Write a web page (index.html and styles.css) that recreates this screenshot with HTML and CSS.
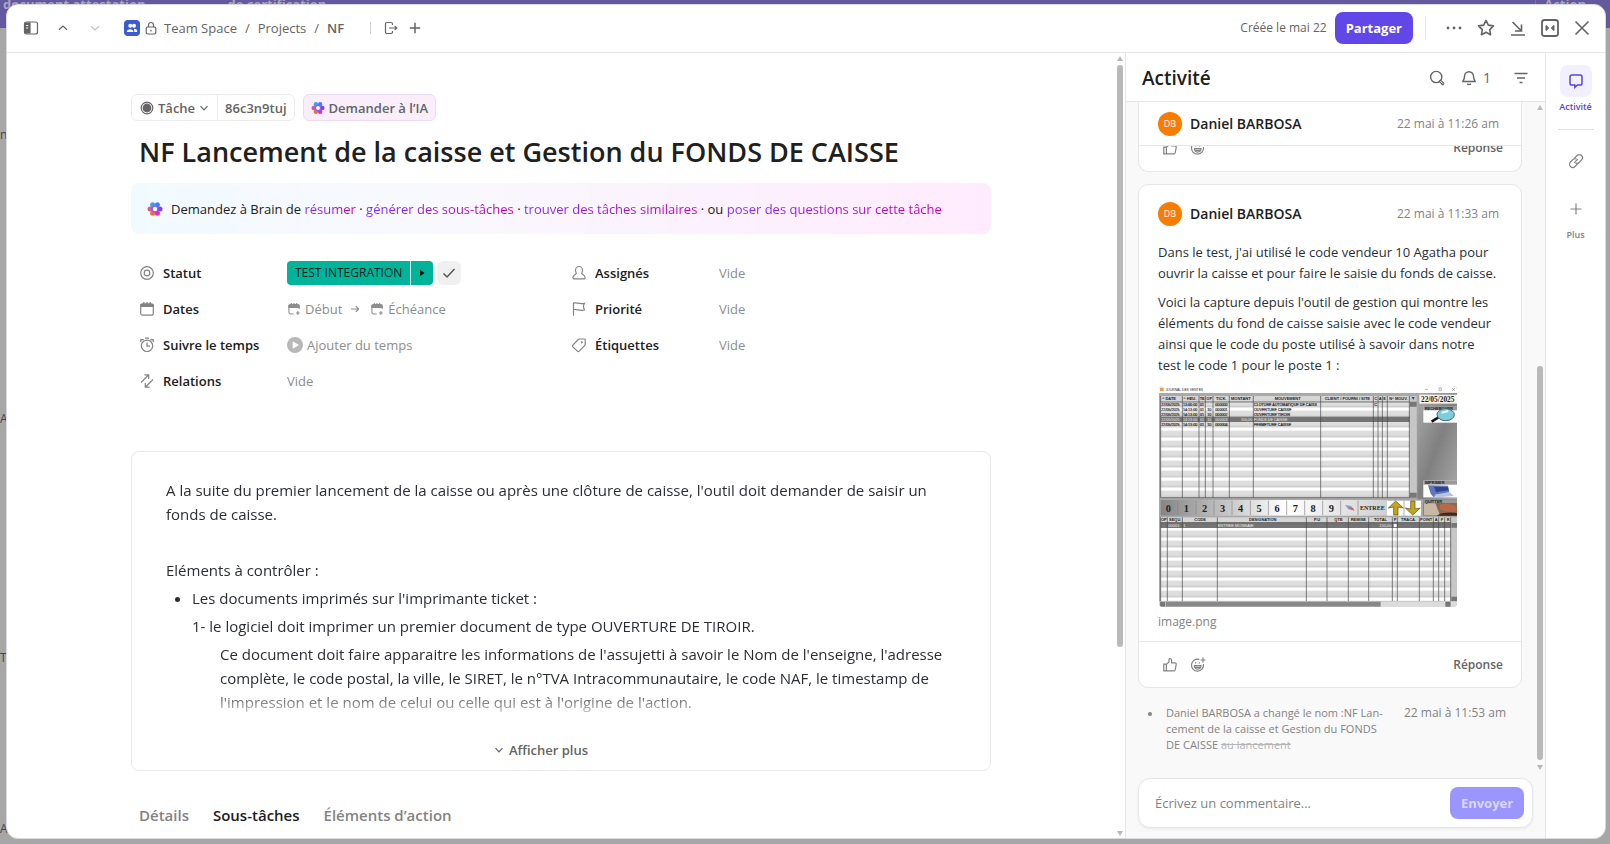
FILE: index.html
```html
<!DOCTYPE html>
<html lang="fr">
<head>
<meta charset="utf-8">
<title>NF Lancement de la caisse et Gestion du FONDS DE CAISSE</title>
<link rel="stylesheet" href="styles.css">
</head>
<body>
<svg class="defs" aria-hidden="true">
  <defs>
    <symbol id="brain" viewBox="0 0 16 16">
      <circle cx="5.6" cy="3.7" r="2.5" fill="#3f9bff"/>
      <circle cx="10.4" cy="3.7" r="2.5" fill="#4a7bff"/>
      <circle cx="13" cy="8" r="2.5" fill="#8a3df5"/>
      <circle cx="10.4" cy="12.3" r="2.5" fill="#e02ad0"/>
      <circle cx="5.6" cy="12.3" r="2.5" fill="#f5683c"/>
      <circle cx="3" cy="8" r="2.5" fill="#d05a9a"/>
      <circle cx="8" cy="8" r="3.6" fill="#8460e8"/>
      <circle cx="8" cy="8" r="2.2" fill="#fff"/>
    </symbol>
    <symbol id="thumb" viewBox="0 0 16 16">
      <path d="M1.8 7.2h2.6v6.6H1.8zM4.4 7.4 7 5V2.6c0-1.6 2.6-1.3 2.6.6v2.6h3.2c1.2 0 1.6.8 1.4 1.6l-.9 5c-.2.9-.7 1.4-1.5 1.4H4.4z"/>
    </symbol>
    <symbol id="smile" viewBox="0 0 16 16">
      <path d="M9.400 2.400A6 6 0 1 0 13.400 7M4.400 8.600h6.600c0 4.600-6.600 4.600-6.600 0zM5.600 5.200v1.200M9.400 5.200v1.200M13 .6v4.800M10.600 3h4.800M5 10.400h5.400"/>
    </symbol>
    <symbol id="cal-add" viewBox="0 0 16 16">
      <path d="M7.6 13.6H4A1.8 1.8 0 0 1 2.2 11.800V4.600A1.600 1.600 0 0 1 3.800 3h8.400a1.600 1.600 0 0 1 1.600 1.600V8M12.400 10.400v4.400M10.200 12.600h4.400"/>
      <path d="M2.200 3.600h11.600v2.600H2.200z" fill="currentColor"/><path d="M5 1.200v2M8 1.200v2M11 1.200v2"/>
    </symbol>
    <symbol id="down" viewBox="0 0 10 10"><path d="M1.500 3.200 5 6.800l3.500-3.600"/></symbol>
  </defs>
</svg>

<div class="backdrop" aria-hidden="true">
  <div class="backdrop-bar"><span>document attestation</span><span class="mid">de certification</span><span class="end">Action</span></div>
  <div class="backdrop-side"><span>n</span><span>A</span><span>T</span><span>AL</span></div>
</div>

<div class="modal" role="dialog" aria-label="Tâche">
  <header class="topbar">
    <button class="icon-btn" aria-label="Barre latérale"><svg class="i16" viewBox="0 0 16 16"><rect x="1.500" y="2" width="13" height="12" rx="2"/><path d="M2 3h5v10H2z" fill="currentColor"/><path d="M3.200 5.500h2M3.200 8h2" stroke="#fff"/></svg></button>
    <button class="icon-btn" aria-label="Précédent"><svg class="i12" viewBox="0 0 12 12"><path d="M2 7.800 6 4l4 3.800"/></svg></button>
    <button class="icon-btn faded" aria-label="Suivant"><svg class="i12" viewBox="0 0 12 12"><path d="M2 4.200 6 8l4-3.800"/></svg></button>
    <nav class="crumbs" aria-label="Emplacement">
      <span class="team"><svg class="i12" viewBox="0 0 12 12"><circle cx="4.300" cy="3.800" r="2" fill="#fff" stroke="none"/><circle cx="8" cy="3.800" r="2" fill="#fff" stroke="none"/><path d="M.8 10c0-3.600 6.400-3.600 6.800 0zM8.300 10h3c0-2.400-1.500-3.400-3.300-3.200z" fill="#fff" stroke="none"/></svg></span>
      <svg class="i14 lock" viewBox="0 0 14 14"><rect x="2.200" y="6" width="9.600" height="7" rx="1.500"/><path d="M4.500 6V4a2.500 2.500 0 0 1 5 0v2M7 8.800v1.600"/></svg>
      <a href="#">Team Space</a><span class="sep">/</span><a href="#">Projects</a><span class="sep">/</span><a href="#" class="here">NF</a>
    </nav>
    <span class="rule"></span>
    <button class="icon-btn tight" aria-label="Déplacer"><svg class="i14" viewBox="0 0 14 14"><path d="M8.500 4V3A1.500 1.500 0 0 0 7 1.500H3A1.500 1.500 0 0 0 1.500 3v8A1.500 1.500 0 0 0 3 12.500h4A1.500 1.500 0 0 0 8.500 11v-1M5 7h7.500M10.600 4.800 12.800 7l-2.200 2.200"/></svg></button>
    <button class="icon-btn tight" aria-label="Ajouter"><svg class="i14" viewBox="0 0 14 14"><path d="M7 1.800v10.400M1.800 7h10.400" stroke-width="1.500"/></svg></button>
    <span class="grow"></span>
    <span class="created">Créée le mai 22</span>
    <button class="share">Partager</button>
    <span class="rule tall"></span>
    <button class="icon-btn" aria-label="Plus d'options"><svg class="i20" viewBox="0 0 20 20"><g fill="currentColor" stroke="none"><circle cx="4" cy="10" r="1.400"/><circle cx="10" cy="10" r="1.400"/><circle cx="16" cy="10" r="1.400"/></g></svg></button>
    <button class="icon-btn" aria-label="Favori"><svg class="i20" viewBox="0 0 20 20"><path d="m10 2.400 2.300 4.700 5.200.8-3.800 3.700.9 5.100-4.600-2.400-4.600 2.400.9-5.100L2.500 7.900l5.200-.8z" stroke-width="1.600" stroke-linejoin="round"/></svg></button>
    <button class="icon-btn" aria-label="Réduire"><svg class="i20" viewBox="0 0 20 20"><path d="m4.500 4 8.700 8.700M13.500 6.500v6.500H7M3 17h14" stroke-width="1.600"/></svg></button>
    <button class="icon-btn" aria-label="Plein écran"><svg class="i20" viewBox="0 0 20 20"><rect x="2" y="2" width="16" height="16" rx="2.500" stroke-width="1.800"/><path d="M6 7.500v5L8.800 10zM14 7.500v5L11.200 10z" fill="currentColor" stroke-width="1"/></svg></button>
    <button class="icon-btn" aria-label="Fermer"><svg class="i20" viewBox="0 0 20 20"><path d="m3.500 3.500 13 13M16.500 3.500l-13 13" stroke-width="1.600"/></svg></button>
  </header>

  <div class="body">
    <main class="task">
      <div class="task-scroll">
        <div class="column">
          <div class="chips">
            <div class="chip-group">
              <button><svg class="i14" viewBox="0 0 14 14"><circle cx="7" cy="7" r="5.800"/><circle cx="7" cy="7" r="3.800" fill="currentColor"/></svg>Tâche<svg class="i10"><use href="#down"/></svg></button>
              <button>86c3n9tuj</button>
            </div>
            <button class="ask"><svg class="i14"><use href="#brain"/></svg>Demander à l’IA</button>
          </div>
          <h1>NF Lancement de la caisse et Gestion du FONDS DE CAISSE</h1>
          <div class="brain">
            <svg class="i16"><use href="#brain"/></svg>
            <p>Demandez à Brain de <a href="#">résumer</a> · <a href="#">générer des sous-tâches</a> · <a href="#">trouver des tâches similaires</a> · ou <a href="#">poser des questions sur cette tâche</a></p>
          </div>

          <div class="fields">
            <div class="field"><span class="name"><svg class="i16" viewBox="0 0 16 16"><circle cx="8" cy="8" r="6.300"/><circle cx="8" cy="8" r="2.800"/></svg>Statut</span>
              <span class="status"><button>TEST INTEGRATION</button><button aria-label="Statut suivant"><svg class="i10" viewBox="0 0 10 10"><path d="M3 1.800v6.400L7.500 5z" fill="#111" stroke="none"/></svg></button></span><button class="done" aria-label="Terminer"><svg class="i16" viewBox="0 0 16 16"><path d="m2.500 8.500 3.500 3.500 7.500-8" stroke-width="1.500"/></svg></button></div>
            <div class="field"><span class="name"><svg class="i16" viewBox="0 0 16 16"><path d="M4.500 5.200a3.500 3.700 0 1 1 7 0c0 1.700-.9 2.500-.7 3.400.4.900 2.800 1.100 3.200 3.600.2 1.200-.2 1.700-1 1.700H3c-.8 0-1.200-.5-1-1.700.4-2.500 2.800-2.700 3.200-3.600.2-.9-.7-1.700-.7-3.400z"/></svg>Assignés</span><span class="value">Vide</span></div>
            <div class="field"><span class="name"><svg class="i16" viewBox="0 0 16 16"><rect x="1.700" y="2.800" width="12.600" height="11.400" rx="2"/><path d="M2 3.500h12v2H2z" fill="currentColor"/><path d="M4.800 1v3M8 1v3M11.200 1v3"/></svg>Dates</span><span class="value"><svg class="i14"><use href="#cal-add"/></svg>Début<svg class="i10 arrow" viewBox="0 0 10 10"><path d="M1 5h7.500M5.800 2.200 8.600 5 5.800 7.800"/></svg><svg class="i14"><use href="#cal-add"/></svg>Échéance</span></div>
            <div class="field"><span class="name"><svg class="i16" viewBox="0 0 16 16"><path d="M2.500 14.800V2c3.500-1 5.500 1.500 11 .3-1.400 2.200-1.400 4.200 0 6.700-5.500 1.200-7.500-1.300-11-.3"/></svg>Priorité</span><span class="value">Vide</span></div>
            <div class="field"><span class="name"><svg class="i16" viewBox="0 0 16 16"><circle cx="8" cy="8.800" r="5.700"/><path d="M8 5.500v3.700h3M1.800 5V2.600h3M14.200 5V2.600h-3M6 1.200h4" /></svg>Suivre le temps</span><span class="value track"><svg class="i16" viewBox="0 0 16 16"><circle cx="8" cy="8" r="8" fill="#b8b8b8" stroke="none"/><path d="M6.300 5.300v5.400L10.800 8z" fill="#fff" stroke="#fff"/></svg>Ajouter du temps</span></div>
            <div class="field"><span class="name"><svg class="i16" viewBox="0 0 16 16"><path d="M1.800 8.200 7.300 2.500c.5-.5.900-.5 1.500-.5h4.700c.4 0 .7.300.7.700v4.500c0 .7-.1 1-.6 1.500l-5.400 5.400c-.6.600-1.200.6-1.800 0L1.800 9.900c-.5-.6-.5-1.100 0-1.700z"/><circle cx="10.800" cy="5.300" r=".5"/></svg>Étiquettes</span><span class="value">Vide</span></div>
            <div class="field"><span class="name"><svg class="i16" viewBox="0 0 16 16"><path d="M2 9.500 9.500 2M5.500 1.800h4.200V6M14 6.500 6.500 14M10.500 14.200H6.300V10"/></svg>Relations</span><span class="value">Vide</span></div>
          </div>

          <section class="doc">
            <div class="doc-text">
              <p>A la suite du premier lancement de la caisse ou après une clôture de caisse, l'outil doit demander de saisir un fonds de caisse.</p>
              <p><br></p>
              <p>Eléments à contrôler :</p>
              <ul><li>Les documents imprimés sur l'imprimante ticket :</li></ul>
              <p class="in1">1- le logiciel doit imprimer un premier document de type OUVERTURE DE TIROIR.</p>
              <p class="in2">Ce document doit faire apparaitre les informations de l'assujetti à savoir le Nom de l'enseigne, l'adresse complète, le code postal, la ville, le SIRET, le n°TVA Intracommunautaire, le code NAF, le timestamp de l'impression et le nom de celui ou celle qui est à l'origine de l'action.</p>
            </div>
            <button class="more"><svg class="i10"><use href="#down"/></svg>Afficher plus</button>
          </section>

          <div class="tabs" role="tablist">
            <button role="tab">Détails</button><button role="tab" aria-selected="true">Sous-tâches</button><button role="tab">Éléments d’action</button>
          </div>
        </div>
      </div>
      <div class="scrollbar" aria-hidden="true"><i class="up"></i><b></b><span class="rest"></span><i class="dn"></i></div>
    </main>

    <aside class="activity">
      <header class="act-head">
        <h2>Activité</h2>
        <button aria-label="Rechercher"><svg class="i16" viewBox="0 0 16 16"><circle cx="7.200" cy="7" r="5.600" stroke-width="1.400"/><path d="m11.400 11.200 2.400 2.400" stroke-width="3" stroke-linecap="round"/><path d="m11.600 11.400 2 2" stroke="#fff" stroke-width="1" stroke-linecap="round"/></svg></button>
        <button class="bell"><svg class="i16" viewBox="0 0 16 16"><path d="M3.500 6.300a4.500 4.500 0 0 1 9 0c0 3.500 1.700 4 1.700 5.200H1.800c0-1.200 1.700-1.700 1.700-5.200zM6 13.800c1.200.9 2.800.9 4 0" stroke-width="1.400"/></svg>1</button>
        <button aria-label="Filtrer"><svg class="i16" viewBox="0 0 16 16"><path d="M1.500 3.500h13M4 8h8M6.500 12.500h3" stroke-width="1.400"/></svg></button>
      </header>
      <div class="feed-wrap">
        <div class="feed">
          <article class="card first">
            <div class="who"><span class="avatar">DB</span><strong>Daniel BARBOSA</strong><time>22 mai à 11:26 am</time></div>
            <footer class="clip"><div class="acts"><svg class="i16"><use href="#thumb"/></svg><svg class="i16"><use href="#smile"/></svg><button>Réponse</button></div></footer>
          </article>
          <article class="card">
            <div class="who top"><span class="avatar">DB</span><strong>Daniel BARBOSA</strong><time>22 mai à 11:33 am</time></div>
            <div class="msg">
              <p>Dans le test, j'ai utilisé le code vendeur 10 Agatha pour ouvrir la caisse et pour faire le saisie du fonds de caisse.</p>
              <p>Voici la capture depuis l'outil de gestion qui montre les éléments du fond de caisse saisie avec le code vendeur ainsi que le code du poste utilisé à savoir dans notre test le code 1 pour le poste 1 :</p>
              <svg class="shot" viewBox="87 48 894 663" role="img" aria-label="Journal des ventes">
                <defs>
                  <pattern id="rows1" x="0" y="95" width="30" height="30" patternUnits="userSpaceOnUse"><rect width="30" height="30" fill="#fff"/><rect width="30" height="15" fill="#dedede"/><path d="M0 15h30M0 30h30" stroke="#999" stroke-width="2"/></pattern>
                  <linearGradient id="keys"><stop offset="0" stop-color="#858585"/><stop offset=".55" stop-color="#fff"/><stop offset="1" stop-color="#d0d0d0"/></linearGradient>
                  <linearGradient id="pane" x2="1" y2="1"><stop offset="0" stop-color="#aaa"/><stop offset=".5" stop-color="#808080"/><stop offset="1" stop-color="#aaa"/></linearGradient>
                </defs>
                <rect x="87" y="48" width="894" height="663" fill="#a9a9a9"/>
                <rect x="87" y="48" width="894" height="21" fill="#fff"/><rect x="90" y="53" width="11" height="10" fill="#e0a050"/>
                <text x="107" y="62" font-size="10" fill="#333">JOURNAL DES VENTES</text>
                <path d="M885 58h9M927 54h7v8h-7zM966 54l9 9M975 54l-9 9" stroke="#555" fill="none"/>
                <rect x="862" y="70" width="119" height="318" fill="url(#pane)"/>
                <rect x="92" y="78" width="747" height="17" fill="#d6d6d6"/><rect x="92" y="95" width="747" height="288" fill="url(#rows1)"/>
                <rect x="92" y="140" width="747" height="16" fill="#747474"/>
                <path d="M92 78v305M157 78v305M207 78v305M226 78v305M249 78v305M298 78v305M370 78v305M572 78v305M730 78v305M744 78v305M757 78v305M772 78v305M838 78v305M92 96h747M92 383h747" stroke="#444" stroke-width="2"/>
                <rect x="840" y="78" width="20" height="305" fill="#c6c6c6"/><path d="M840 95h20v15h-20zM840 368h20v15h-20z" fill="#777"/><path d="M845 81h9l-4 9z" fill="#224a9a"/>
                <g font-weight="700" font-size="12" fill="#222"><text x="96" y="91">^ DATE</text><text x="160" y="91">^ HEU.</text><text x="209" y="91">TE</text><text x="229" y="91">OP</text><text x="258" y="91">TICK.</text><text x="303" y="91">MONTANT</text><text x="434" y="91">MOUVEMENT</text><text x="584" y="91">CLIENT / FOURNI / SITE</text><text x="733" y="91">C</text><text x="746" y="91">A</text><text x="760" y="91">E</text><text x="778" y="91">N° MOUV.</text></g>
                <g font-size="11" fill="#222" stroke="#222" stroke-width=".5">
                  <text x="94" y="107">22/05/2025</text><text x="159" y="107">13:00:00</text><text x="210" y="107">01</text><text x="256" y="107">000000</text><text x="372" y="107">CLOTURE AUTOMATIQUE DE CAISS</text><text x="733" y="107">C</text>
                  <text x="94" y="122">22/05/2025</text><text x="159" y="122">14:13:00</text><text x="210" y="122">01</text><text x="232" y="122">10</text><text x="256" y="122">000001</text><text x="372" y="122">OUVERTURE CAISSE</text>
                  <text x="94" y="137">22/05/2025</text><text x="159" y="137">14:13:00</text><text x="210" y="137">01</text><text x="232" y="137">10</text><text x="256" y="137">000002</text><text x="372" y="137">OUVERTURE TIROIR</text>
                  <text x="94" y="167">22/05/2025</text><text x="159" y="167">14:13:00</text><text x="210" y="167">01</text><text x="232" y="167">10</text><text x="256" y="167">000004</text><text x="372" y="167">FERMETURE CAISSE</text>
                </g>
                <g font-size="11" class="light"><text x="94" y="152">22/05/2025</text><text x="159" y="152">14:13:00</text><text x="210" y="152">01</text><text x="232" y="152">10</text><text x="256" y="152">000003</text><text x="333" y="152">150,00</text><text x="372" y="152">FONDS DE CAISSE</text></g>
                <rect x="868" y="74" width="113" height="27" fill="#f7f3e6"/><text x="873" y="95" class="serif" font-size="22" font-weight="700">22/05/2025</text>
                <rect x="880" y="108" width="101" height="50" fill="#fff"/><rect x="880" y="108" width="101" height="13" fill="#999"/><text x="884" y="119" font-size="12" font-weight="700">RECHERCHER</text>
                <path d="M905 155l22-14" stroke="#111" stroke-width="8"/><ellipse cx="947" cy="134" rx="26" ry="18" fill="#7ecbdc" stroke="#356a7c" stroke-width="3"/><path d="M935 128l20-5" stroke="#e6fbff" stroke-width="6"/>
                <rect x="880" y="332" width="101" height="50" fill="#fff"/><rect x="880" y="332" width="101" height="12" fill="#999"/><text x="884" y="343" font-size="12" font-weight="700">IMPRIMER</text>
                <path d="M894 346l60 1 4 20-48 14-8-10z" fill="#6275ba"/><path d="M912 350l42 2 2 9-38 5z" fill="#2f438f"/><path d="M912 374l46-8 14 12-50 4z" fill="#b8c2dc"/>
                <rect x="880" y="388" width="101" height="49" fill="#8d6850"/><path d="M882 400h34l14 36h-48z" fill="#c9b9a4"/><path d="M930 404q30-8 50 8v10q-24 10-50-4z" fill="#b66a48"/><path d="M920 437q20-14 61-8v8z" fill="#452618"/><rect x="880" y="388" width="101" height="11" fill="#999"/><text x="884" y="398" font-size="12" font-weight="700">QUITTER</text>
                <rect x="92" y="390" width="680" height="47" fill="url(#keys)"/>
                <path d="M143 392v43M198 392v43M252 392v43M306 392v43M361 392v43M415 392v43M470 392v43M524 392v43M578 392v43M632 392v43M684 392v43" stroke="#888" stroke-width="2"/>
                <g class="serif" font-size="31" font-weight="700" text-anchor="middle" fill="#222"><text x="115" y="425">0</text><text x="169" y="425">1</text><text x="224" y="425">2</text><text x="278" y="425">3</text><text x="332" y="425">4</text><text x="387" y="425">5</text><text x="441" y="425">6</text><text x="496" y="425">7</text><text x="549" y="425">8</text><text x="604" y="425">9</text><text x="727" y="420" font-size="18">ENTREE</text></g>
                <path d="M645 405l18 3 10 13-18-3z" fill="#8aa0c8"/><path d="M657 411l12 3 4 8-13-5z" fill="#d06060"/>
                <rect x="771" y="392" width="102" height="45" fill="#fff"/><path d="M822 392v45" stroke="#888" stroke-width="2"/><path d="M797 393l23 21-16-3v24h-13v-24l-16 3zM848 435l23-21-16 3v-24h-13v24l-16-3z" fill="#c4a51e" stroke="#594a0d" stroke-width="2"/>
                <rect x="92" y="442" width="870" height="16" fill="#d6d6d6"/><rect x="92" y="458" width="870" height="235" fill="url(#rows1)"/><rect x="92" y="458" width="870" height="16" fill="#747474"/>
                <path d="M92 442v251M112 442v251M157 442v251M262 442v251M529 442v251M591 442v251M655 442v251M716 442v251M787 442v251M802 442v251M868 442v251M910 442v251M926 442v251M944 442v251M962 442v251M92 458h870" stroke="#444" stroke-width="2"/>
                <g font-weight="700" font-size="12" fill="#222"><text x="93" y="454">OP</text><text x="117" y="454">SEQU.</text><text x="193" y="454">CODE</text><text x="357" y="454">DESIGNATION</text><text x="552" y="454">P.U</text><text x="613" y="454">QTE</text><text x="662" y="454">REMISE</text><text x="732" y="454">TOTAL</text><text x="791" y="454">P</text><text x="813" y="454">TRACA.</text><text x="870" y="454">POINT</text><text x="914" y="454">A</text><text x="932" y="454">F</text><text x="950" y="454">R</text></g>
                <g font-size="12" class="light"><text x="115" y="471">00001</text><text x="160" y="471">1</text><text x="263" y="471">ENTREE MONNAIE</text><text x="748" y="471">150,00</text></g><rect x="791" y="462" width="9" height="9" fill="#fff"/>
                <rect x="964" y="442" width="17" height="251" fill="#c6c6c6"/><path d="M964 459h17v14h-17zM964 680h17v13h-17z" fill="#777"/>
                <rect x="87" y="694" width="894" height="17" fill="#dcdcdc"/><rect x="108" y="695" width="644" height="15" fill="#888"/><path d="M90 695h16v15H90zM946 695h16v15h-16z" fill="#777"/>
              </svg>
              <span class="caption">image.png</span>
            </div>
            <footer class="acts"><svg class="i16"><use href="#thumb"/></svg><svg class="i16"><use href="#smile"/></svg><button>Réponse</button></footer>
          </article>
          <div class="event"><span class="dot"></span><p>Daniel BARBOSA a changé le nom :NF Lan-<br>cement de la caisse et Gestion du FONDS<br>DE CAISSE <del>au lancement</del></p><time>22 mai à 11:53 am</time></div>
        </div>
        <div class="scrollbar low" aria-hidden="true"><i class="up"></i><span class="lead"></span><b></b><i class="dn"></i></div>
      </div>
      <form class="composer"><input type="text" aria-label="Commentaire" placeholder="Écrivez un commentaire..."><button type="button">Envoyer</button></form>
    </aside>

    <nav class="rail" aria-label="Panneaux">
      <button class="on"><span class="tile"><svg class="i16" viewBox="0 0 16 16"><path d="M3.800 2h8.400a1.800 1.800 0 0 1 1.800 1.800v6.400a1.800 1.800 0 0 1-1.800 1.800H9.500L6.800 14.300V12h-3A1.800 1.800 0 0 1 2 10.200V3.800A1.800 1.800 0 0 1 3.800 2z" stroke-width="1.500"/></svg></span>Activité</button>
      <hr>
      <button aria-label="Liens" class="link"><span class="tile"><svg class="i16" viewBox="0 0 16 16"><path d="M6.500 5 9 2.500a3.100 3.100 0 0 1 4.500 4.500L11 9.500a3 3 0 0 1-3.500.6M9.500 11 7 13.500A3.100 3.100 0 0 1 2.500 9L5 6.500a3 3 0 0 1 3.500-.6M6.200 9.800l3.600-3.600"/></svg></span></button>
      <button><span class="tile"><svg class="i14" viewBox="0 0 14 14"><path d="M7 1.500v11M1.500 7h11"/></svg></span>Plus</button>
    </nav>
  </div>
</div>
</body>
</html>
```
FILE: styles.css
```css
* { box-sizing: border-box; }
body {
  margin: 0;
  height: 100vh;
  overflow: hidden;
  background: #a7a7a7;
  color: #202020;
  font: 13px/20px "Open Sans", "Noto Sans", sans-serif;
}
h1, h2, p, ul { margin: 0; padding: 0; }
button { font: inherit; color: inherit; background: none; border: 0; padding: 0; cursor: pointer; }
a { color: inherit; text-decoration: none; }
svg { fill: none; stroke: currentColor; stroke-width: 1.2; flex: none; display: block; }
.defs { position: absolute; width: 0; height: 0; }
#brain circle { stroke: none; }
.i10 { width: 10px; height: 10px; }
.i12 { width: 12px; height: 12px; }
.i14 { width: 14px; height: 14px; }
.i16 { width: 16px; height: 16px; }
.i20 { width: 20px; height: 20px; }
.grow { flex: 1; }

/* Dimmed page behind the dialog */
.backdrop-bar { height: 28px; background: #64599e; color: #a9a5bf; display: flex; font-weight: 700; line-height: 16px; overflow: hidden; padding-left: 3px; }
.backdrop-bar span { margin-top: -4px; }
.backdrop-bar .mid { margin-left: 82px; }
.backdrop-bar .end { margin-left: auto; padding: 0 24px 0 8px; border-left: 1px solid #7a70ab; }
.backdrop-side { display: grid; grid-template-rows: 284px 239px 171px 18px; padding-top: 98px; color: #444; font-size: 12px; line-height: 18px; }

.modal {
  position: fixed;
  inset: 4px 4px 5px 6px;
  display: flex;
  flex-direction: column;
  background: #fff;
  border: 1px solid #d9d9df;
  border-radius: 12px;
  overflow: hidden;
}

/* Top bar */
.topbar { flex: none; height: 48px; display: flex; align-items: center; padding: 0 7px 1px 8px; border-bottom: 1px solid #e6e6e6; color: #646464; }
.icon-btn { width: 32px; height: 32px; display: grid; place-items: center; }
.icon-btn.faded { color: #c4c4c4; }
.icon-btn.tight { width: 24px; }
.crumbs { display: flex; align-items: center; margin-left: 13px; }
.team { width: 16px; height: 16px; border-radius: 4px; background: #3d5bd0; display: grid; place-items: center; }
.lock { margin: 0 6px 0 4px; }
.sep { margin: 0 8px; }
.here { font-weight: 600; }
.rule { width: 1px; height: 12px; background: #d0d0d0; margin: 0 8px 0 26px; }
.rule.tall { height: 24px; background: #e6e6e6; margin: 0 12px; }
.created { font-size: 12px; margin-right: 8px; }
.share { height: 32px; padding: 0 11px; border-radius: 8px; background: #6147e7; color: #fff; font-weight: 700; }

.body { flex: 1; display: flex; min-height: 0; }

/* Task */
.task { flex: 1; display: flex; min-width: 0; }
.task-scroll { flex: 1; min-width: 0; overflow: hidden; }
.column { max-width: 860px; margin: 0 auto; padding-top: 41px; }
.scrollbar { width: 10px; display: flex; flex-direction: column; align-items: center; padding: 3px 0 2px; }
.scrollbar b { width: 6px; border-radius: 3px; background: #b9b9b9; flex: 583; }
.scrollbar .rest { flex: 179; }
.scrollbar .lead { flex: 255; }
.scrollbar.low b { flex: 398; }
.scrollbar i { width: 0; height: 0; border: 3px solid transparent; }
.scrollbar .up { border-bottom: 5px solid #b9b9b9; border-top: 0; margin-bottom: 4px; }
.scrollbar .dn { border-top: 5px solid #b9b9b9; border-bottom: 0; margin-top: 5px; }
.scrollbar.low { padding-bottom: 0; }

.chips { display: flex; gap: 8px; color: #646464; font-weight: 600; }
.chip-group { display: flex; border: 1px solid #ececec; border-radius: 6px; }
.chips button { display: flex; align-items: center; height: 25px; padding: 0 8px; gap: 4px; }
.chip-group button + button { border-left: 1px solid #ececec; padding: 0 7px; }
.chips .ask { height: 27px; padding: 0 7px; border: 1px solid #eddcf0; border-radius: 6px; background: #faeefb; }
h1 { margin: 11px 0 12px 8px; font-size: 27px; line-height: 39px; font-weight: 600; }
.brain { display: flex; align-items: center; gap: 8px; height: 51px; padding: 0 16px; border-radius: 8px; background: linear-gradient(90deg, #f1fbff, #f9f8ff 35%, #ffebfd); }
.brain a { background: linear-gradient(90deg, #7b2ff7, #c800a8); background-clip: text; -webkit-background-clip: text; color: transparent; }

.fields { display: grid; grid-template-columns: 1fr 1fr; column-gap: 4px; row-gap: 12px; padding-top: 27px; }
.field { height: 24px; display: flex; align-items: center; }
.name { width: 148px; margin-left: 8px; display: flex; align-items: center; gap: 8px; font-weight: 600; }
.name svg { color: #838383; }
.value { display: flex; align-items: center; gap: 4px; color: #8d8d8d; }
.value .arrow { margin: 0 6px 0 4px; }
.status { display: flex; border-radius: 4px; background: #00b499; color: #0b1d1a; font-size: 12px; overflow: hidden; }
.status button { height: 24px; padding: 0 8px; display: grid; place-items: center; }
.status button + button { padding: 0 6px; border-left: 1px solid #d7f3ef; }
.done { width: 24px; height: 24px; margin-left: 4px; border-radius: 6px; background: #f0f0f0; color: #555; display: grid; place-items: center; }

.doc { margin-top: 58px; border: 1px solid #e9e9e9; border-radius: 8px; padding: 26px 34px 0; font-size: 15px; line-height: 24px; color: #2a2e34; }
.doc-text { display: grid; gap: 4px; -webkit-mask-image: linear-gradient(#000 212px, transparent 244px); mask-image: linear-gradient(#000 212px, transparent 244px); }
.doc ul { padding-left: 26px; }
.in1 { padding-left: 26px; }
.in2 { padding-left: 54px; }
.more { display: flex; align-items: center; gap: 5px; margin: 24px auto 8px; padding-right: 40px; color: #646464; font-size: 13px; font-weight: 600; }
.tabs { display: flex; gap: 24px; margin: 32px 8px 0; font-size: 15px; line-height: 24px; font-weight: 600; color: #838383; }
.tabs [aria-selected="true"] { color: #202020; }

/* Activity */
.activity { flex: none; width: 420px; display: flex; flex-direction: column; background: #f9f9f9; border-left: 1px solid #e6e6e6; }
.act-head { flex: none; height: 49px; display: flex; align-items: center; gap: 16px; padding: 2px 16px 0; background: #fff; border-bottom: 1px solid #e6e6e6; color: #646464; }
h2 { flex: 1; font-size: 19px; line-height: 28px; font-weight: 600; color: #202020; }
.bell { display: flex; align-items: center; gap: 6px; font-size: 14px; }
.act-head .bell + button { margin-left: 6px; }
.feed-wrap { flex: 1; display: flex; min-height: 0; }
.feed { flex: 1; display: flex; flex-direction: column; justify-content: flex-end; gap: 12px; padding: 0 13px 17px 12px; overflow: hidden; }
.card { flex: none; background: #fff; border: 1px solid #e6e6e6; border-radius: 10px; }
.card.first { border-radius: 0 0 10px 10px; border-top: 0; }
.who { display: flex; align-items: center; gap: 8px; height: 44px; padding: 0 22px 0 19px; }
.first .who { border-bottom: 1px solid #e6e6e6; }
.who.top { height: 57px; }
.who strong { flex: 1; font-size: 14px; font-weight: 600; }
.avatar { width: 24px; height: 24px; border-radius: 50%; background: #f77c00; color: #fff; font-size: 9px; display: grid; place-items: center; }
time { color: #838383; font-size: 12px; }
.clip { height: 25px; overflow: hidden; display: flex; align-items: flex-end; }
.clip .acts { flex: 1; border-top: 0; }
.acts { display: flex; align-items: center; gap: 12px; height: 46px; padding: 0 18px 0 23px; border-top: 1px solid #e6e6e6; color: #838383; }
.acts button { margin-left: auto; font-size: 12px; font-weight: 600; color: #646464; }
.msg { padding: 0 24px 9px 19px; line-height: 21px; color: #2a2e34; }
.msg p { margin-bottom: 8px; }
.shot { width: 298px; height: auto; margin: 10px 0 5px 1px; border-radius: 4px; stroke: none; font-family: "Liberation Sans", Arial, sans-serif; }
.shot text { fill: #222; }
.shot .light text { fill: #eee; }
.shot .serif { font-family: "Liberation Serif", serif; }
.caption { display: block; color: #838383; line-height: 20px; font-size: 12px; }
.event { display: flex; align-items: flex-start; color: #838383; font-size: 12px; line-height: 16px; padding: 5px 16px 0 10px; }
.event p { flex: 1; font-size: 11px; }
.event del { color: #b5b5b5; }
.dot { width: 4px; height: 4px; border-radius: 50%; background: #838383; margin: 7px 14px 0 0; }
.composer { flex: none; display: flex; align-items: center; height: 50px; margin: 8px 12px 10px 12px; padding: 0 8px 0 16px; background: #fff; border: 1px solid #e6e6e6; border-radius: 12px; box-shadow: 0 1px 3px #00000010; }
.composer input { flex: 1; min-width: 0; border: 0; outline: 0; background: none; font: inherit; color: #202020; padding: 0; }
.composer input::placeholder { color: #838383; opacity: 1; }
.composer button { width: 74px; height: 32px; border-radius: 8px; background: #9b96ff; color: #dad7ff; font-weight: 700; }

/* Right rail */
.rail { flex: none; width: 60px; border-left: 1px solid #e6e6e6; display: flex; flex-direction: column; align-items: center; padding-top: 12px; color: #838383; font-size: 9px; line-height: 20px; }
.rail button { display: flex; flex-direction: column; align-items: center; font-weight: 600; }
.tile { width: 32px; height: 32px; border-radius: 8px; display: grid; place-items: center; }
.rail .on { color: #5b43d6; }
.on .tile { background: #f2f0ff; }
.rail hr { width: 36px; border: 0; border-top: 1px solid #e0e0e0; margin: 12px 0 15px; }
.link { margin-bottom: 16px; }
```
